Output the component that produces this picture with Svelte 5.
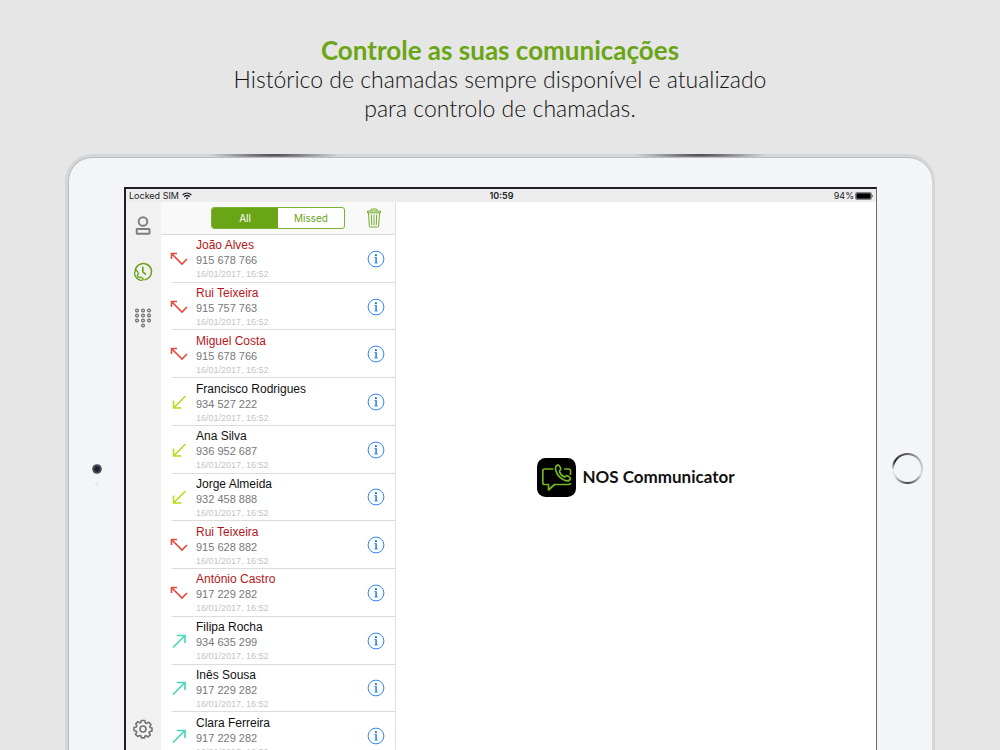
<script>
  const date = '16/01/2017, 16:52';
  const calls = [
    { name: 'João Alves', phone: '915 678 766', kind: 'missed' },
    { name: 'Rui Teixeira', phone: '915 757 763', kind: 'missed' },
    { name: 'Miguel Costa', phone: '915 678 766', kind: 'missed' },
    { name: 'Francisco Rodrigues', phone: '934 527 222', kind: 'incoming' },
    { name: 'Ana Silva', phone: '936 952 687', kind: 'incoming' },
    { name: 'Jorge Almeida', phone: '932 458 888', kind: 'incoming' },
    { name: 'Rui Teixeira', phone: '915 628 882', kind: 'missed' },
    { name: 'António Castro', phone: '917 229 282', kind: 'missed' },
    { name: 'Filipa Rocha', phone: '934 635 299', kind: 'outgoing' },
    { name: 'Inês Sousa', phone: '917 229 282', kind: 'outgoing' },
    { name: 'Clara Ferreira', phone: '917 229 282', kind: 'outgoing' }
  ];
  const arrows = {
    missed: 'M8 4.5H2.5V10M2.5 4.5L13 15L18 10',
    incoming: 'M4.5 8.500V16H12.500M4.500 16L16.500 4',
    outgoing: 'M8 4.5H16V12M16 4.5L4 16.500'
  };
  let filter = $state('all');
  const shown = $derived(filter === 'all' ? calls : calls.filter((c) => c.kind === 'missed'));
</script>

<div class="page">
  <header class="intro">
    <h1>Controle as suas comunicações</h1>
    <p>Histórico de chamadas sempre disponível e atualizado<br />para controlo de chamadas.</p>
  </header>

  <div class="tablet">
    <div class="face">
      <div class="bezel left">
        <svg width="14" height="34" viewBox="0 0 14 34" aria-hidden="true">
          <circle cx="7" cy="17" r="4.800" fill="#4b4b50" />
          <circle cx="7" cy="17" r="2.800" fill="#1b2138" />
          <circle cx="7" cy="32" r="2" fill="#e7e9eb" />
        </svg>
      </div>

      <div class="screen">
        <div class="status">
          <span class="carrier">
            Locked SIM
            <svg width="10" height="8" viewBox="0 0 10 8" fill="none" stroke="#222" stroke-width="1.3" aria-hidden="true">
              <path d="M.6 3C3.200.500 6.800.500 9.400 3M2.300 4.800C3.800 3.400 6.200 3.400 7.700 4.800" />
              <path d="M5 7.600L3.600 6.100Q5 5 6.400 6.100Z" fill="#222" stroke="none" />
            </svg>
          </span>
          <span class="time">10:59</span>
          <span class="battery">
            94%
            <svg width="19" height="8" viewBox="0 0 19 8" aria-hidden="true">
              <rect x=".5" y=".5" width="16" height="7" rx="1.500" fill="none" stroke="#555" stroke-width=".7" />
              <rect x="1.300" y="1.300" width="14.400" height="5.400" rx=".6" fill="#000" />
              <path d="M17.400 2.500Q19 4 17.400 5.500Z" fill="#222" />
            </svg>
          </span>
        </div>

        <div class="app">
          <nav class="side" aria-label="Main">
            <button aria-label="Contacts">
              <svg viewBox="0 0 20 20" fill="none" stroke="#7d7d7d" stroke-width="1.900">
                <circle cx="10" cy="5.500" r="4.300" />
                <rect x="3.700" y="13" width="12.800" height="4.800" rx=".5" />
              </svg>
            </button>
            <button aria-label="Call history" aria-current="page">
              <svg viewBox="0 0 20 20" fill="none" stroke="#67a315" stroke-width="1.600" stroke-linecap="round" stroke-linejoin="round">
                <path d="M2.300 8A8.200 8.200 0 1 1 12 17.700" />
                <path d="M9.800 5.200V9.800L12.400 12.100" stroke-width="1.600" />
                <path d="M2.200 9.200C.3 12.800 3.800 18.500 8.800 18.300C10.300 18.200 10.600 17 9.700 16.200L8 15.200C7 14.800 6.700 15.900 6 15.500C5 14.900 4.300 13.700 4.500 12.900C4.800 12.300 5.600 12.200 5.300 11.300L4.300 9.300C3.800 8.300 2.800 8.200 2.200 9.200Z" stroke-width="1.300" />
              </svg>
            </button>
            <button aria-label="Keypad">
              <svg viewBox="0 0 20 20" fill="none" stroke="#737373" stroke-width="1.300">
                {#each [2.5, 7.5, 12.5] as y}
                  {#each [4, 10, 16] as x}
                    <circle cx={x} cy={y} r="1.400" />
                  {/each}
                {/each}
                <circle cx="10" cy="17.500" r="1.400" />
              </svg>
            </button>
            <button class="settings" aria-label="Settings">
              <svg viewBox="0 0 20 20" fill="none" stroke="#737373" stroke-width="1.600" stroke-linejoin="round">
                <circle cx="10" cy="10" r="3" />
                <path d="M8.300 1.500H11.700L12.300 3.800L13.600 4.400L15.700 3.200L18 5.500L16.700 7.600L17.100 8.500L19 9V12L16.600 12.700L16.100 13.700L17.200 15.900L15 18L13 16.700L12 17.100L11.400 18.900H8.600L8 17L6.800 16.500L4.800 17.500L2.500 15.300L3.700 13.100L3.300 12.200L1 11.500V8.500L3.300 7.900L3.800 6.700L2.700 4.800L4.900 2.700L6.900 3.900L7.800 3.500Z" />
              </svg>
            </button>
          </nav>

          <section class="history" aria-label="Call history">
            <div class="toolbar">
              <div class="segments">
                <button aria-pressed={filter === 'all'} onclick={() => (filter = 'all')}>All</button>
                <button aria-pressed={filter === 'missed'} onclick={() => (filter = 'missed')}>Missed</button>
              </div>
              <button class="trash" aria-label="Delete history">
                <svg width="16" height="20" viewBox="0 0 16 20" fill="none" stroke="#74ac2b" stroke-width="1">
                  <path d="M1.500 3H14.500V4.800H1.500ZM5 2.800V1.800Q5 1 5.800 1H10.200Q11 1 11 1.800V2.800M2.500 5L3.300 18Q3.400 19 4.400 19H11.600Q12.600 19 12.700 18L13.500 5M5.300 6.500L5.800 17M8 6.500V17M10.700 6.500L10.200 17" />
                </svg>
              </button>
            </div>

            <ul>
              {#each shown as call}
                <li class={call.kind}>
                  <svg class="arrow" viewBox="0 0 20 20" fill="none" stroke="currentColor" stroke-width="1.600" aria-hidden="true">
                    <path d={arrows[call.kind]} />
                  </svg>
                  <div class="who">
                    <span class="name">{call.name}</span>
                    <span class="phone">{call.phone}</span>
                    <span class="date">{date}</span>
                  </div>
                  <button class="info" aria-label="Details for {call.name}">
                    <svg width="18" height="18" viewBox="0 0 18 18" aria-hidden="true">
                      <circle cx="9" cy="9" r="7.900" fill="none" stroke="#2f86f0" stroke-width="1" />
                      <circle cx="8.900" cy="5.200" r="1.100" fill="#1f7cf0" />
                      <path d="M7.400 7.600H9.100M7.400 13H10.800" fill="none" stroke="#1f7cf0" stroke-width=".8" />
                      <path d="M9.100 7.200V13" stroke="#1f7cf0" stroke-width="1.500" />
                    </svg>
                  </button>
                </li>
              {/each}
            </ul>
          </section>

          <main class="detail">
            <svg width="39" height="39" viewBox="0 0 39 39" aria-hidden="true">
              <rect width="39" height="39" rx="8.500" fill="#000" />
              <g fill="none" stroke="#76b51b" stroke-width="1.700" stroke-linejoin="round">
                <path d="M16.500 11H7.500Q5.800 11 5.800 12.700V24.800Q5.800 26.500 7.500 26.500H11.500V32L17.500 26.500H32Q33.500 26.500 33.500 25" />
                <path d="M27 11H31.800Q33.500 11 33.500 12.700V17" />
                <path d="M20.500 7C18.800 8 18.200 10 18.800 12.500C20 17.500 24.500 21.800 29.500 22.800C31.500 23 33 22 33.500 20.600C33.800 19.700 30.500 17.300 29.500 17.700C28.600 18 28.500 19.300 27.300 18.900C25.200 18 23 15.500 22.500 13.500C22.300 12.300 23.800 12.200 23.800 11C23.700 9.700 21.700 6.500 20.500 7Z" />
              </g>
            </svg>
            <span>NOS Communicator</span>
          </main>
        </div>
      </div>

      <div class="bezel right">
        <button class="home" aria-label="Home"></button>
      </div>
    </div>
  </div>
</div>

<style>
  :global(body) {
    margin: 0;
    background: #e6e6e6;
  }
  .page {
    height: 100vh;
    display: flex;
    flex-direction: column;
    overflow: hidden;
    background: #e6e6e6;
    font-family: 'Liberation Sans', Arial, sans-serif;
  }
  button {
    margin: 0;
    padding: 0;
    border: 0;
    background: none;
    font: inherit;
    cursor: pointer;
  }
  svg {
    display: block;
    flex: none;
  }
  .intro {
    padding: 36px 24px 31px;
    text-align: center;
    font-family: Lato, sans-serif;
    color: #111;
  }
  h1 {
    margin: 0;
    font-size: 26px;
    line-height: 29px;
    font-weight: 700;
    color: #6aa515;
  }
  .intro p {
    margin: 0;
    font-size: 23px;
    line-height: 29px;
    font-weight: 300;
  }
  .tablet {
    flex: 1;
    min-height: 0;
    margin: 0 65px;
    padding: 3px 3px 0;
    display: flex;
    border-radius: 27px 27px 0 0;
    background:
      radial-gradient(ellipse 66px 4px at 24% 1px, #444449, #44444900),
      radial-gradient(ellipse 66px 4px at 73% 1px, #444449, #44444900),
      #d3d7d7;
  }
  .face {
    flex: 1;
    display: flex;
    box-sizing: border-box;
    padding-top: 29px;
    border: 1px solid #b9bcc0;
    border-width: 1px 0 0 1px;
    border-radius: 24px 24px 0 0;
    background: #f4f5f8;
  }
  .bezel {
    flex: none;
    width: 55px;
    display: flex;
    align-items: center;
    justify-content: center;
  }
  .bezel.right {
    box-sizing: border-box;
    padding-left: 5px;
  }
  .home {
    width: 31px;
    height: 31px;
    border-radius: 50%;
    border: 2px solid transparent;
    background:
      linear-gradient(#f4f5f8, #f4f5f8) padding-box,
      conic-gradient(#666, #bbb 60deg, #ddd 110deg, #444 180deg, #ddd 240deg, #eee 265deg, #222 300deg, #666) border-box;
  }
  .screen {
    flex: 1;
    min-width: 0;
    display: flex;
    flex-direction: column;
    border: solid #202024;
    border-width: 2px 0 0 2px;
    border-right: 1px solid #6d6d70;
    background: #fff;
  }
  .status {
    display: grid;
    grid-template-columns: 1fr auto 1fr;
    align-items: center;
    padding: 0 2px 0 3px;
    background: #ededed;
    font: 9px/13px Inter, sans-serif;
    color: #222;
  }
  .carrier,
  .battery {
    display: flex;
    align-items: center;
    gap: 3px;
  }
  .battery {
    justify-content: flex-end;
    gap: 1px;
  }
  .time {
    font-weight: 600;
  }
  .app {
    flex: 1;
    min-height: 0;
    display: flex;
  }
  .side {
    flex: none;
    width: 35px;
    box-sizing: border-box;
    padding: 14px 7px 11px;
    display: flex;
    flex-direction: column;
    align-items: flex-start;
    gap: 26px;
    background: #f1f1f1;
  }
  .side svg {
    width: 20px;
    height: 20px;
  }
  .settings {
    margin-top: auto;
  }
  .history {
    flex: none;
    width: 234px;
    display: flex;
    flex-direction: column;
    border-right: 1px solid #e2e2e2;
  }
  .toolbar {
    flex: none;
    display: flex;
    align-items: center;
    justify-content: flex-end;
    gap: 21px;
    height: 32px;
    padding-right: 13px;
    border-bottom: 1px solid #d9d9d9;
    background: #f9f9f9;
  }
  .segments {
    display: grid;
    grid-template-columns: 1fr 1fr;
    width: 132px;
    border: 1px solid #7db33a;
    border-radius: 3px;
    overflow: hidden;
    background: #fff;
  }
  .segments button {
    font: 10px/20px Inter, sans-serif;
    color: #6aa515;
  }
  .segments button[aria-pressed='true'] {
    background: #6aa515;
    color: #fff;
  }
  ul {
    flex: 1;
    margin: 0 0 -10px;
    padding: 0;
    list-style: none;
    display: grid;
    grid-template-rows: repeat(11, 1fr);
  }
  li {
    display: flex;
    align-items: center;
    padding: 0 10px 0 8px;
    background: linear-gradient(#dcdcdc, #dcdcdc) 11px 100% / 100% 1px no-repeat;
  }
  .arrow {
    width: 20px;
    height: 20px;
  }
  .who {
    flex: 1;
    display: flex;
    flex-direction: column;
    padding: 2px 0 0 7px;
  }
  .name {
    font-size: 12px;
    line-height: 15px;
    color: #111;
  }
  .phone {
    font-size: 11px;
    line-height: 15px;
    color: #777;
  }
  .date {
    font-size: 9px;
    line-height: 13px;
    color: #c4c4c4;
  }
  .missed {
    color: #e24a3c;
  }
  .missed .name {
    color: #b5161b;
  }
  .incoming {
    color: #b8da1c;
  }
  .outgoing {
    color: #42d8ba;
  }
  .detail {
    flex: 1;
    min-width: 0;
    display: flex;
    align-items: center;
    justify-content: center;
    gap: 6px;
    padding-top: 2px;
    font: 700 17px/24px Lato, sans-serif;
    color: #111;
  }
</style>
